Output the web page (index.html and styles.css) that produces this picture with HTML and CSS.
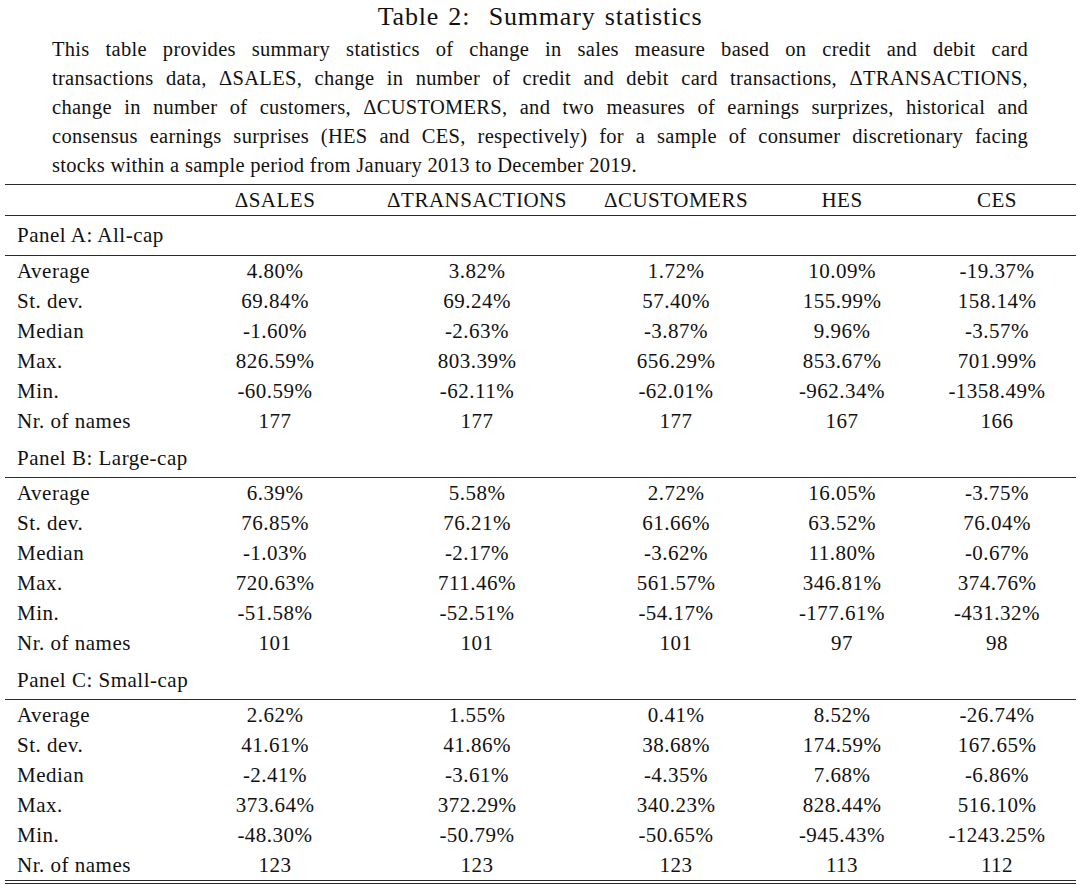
FILE: index.html
```html
<!DOCTYPE html>
<html>
<head>
<meta charset="utf-8">
<link rel="stylesheet" href="styles.css">
</head>
<body>
<div class="page">
  <div class="title">Table 2:&nbsp; Summary statistics</div>
  <div class="caption">
    <div class="cl">This table provides summary statistics of change in sales measure based on credit and debit card</div>
    <div class="cl">transactions data, ΔSALES, change in number of credit and debit card transactions, ΔTRANSACTIONS,</div>
    <div class="cl">change in number of customers, ΔCUSTOMERS, and two measures of earnings surprizes, historical and</div>
    <div class="cl">consensus earnings surprises (HES and CES, respectively) for a sample of consumer discretionary facing</div>
    <div class="cl last">stocks within a sample period from January 2013 to December 2019.</div>
  </div>
  <div class="table">
    <div class="row head">
      <div class="lab"></div><div>ΔSALES</div><div>ΔTRANSACTIONS</div><div>ΔCUSTOMERS</div><div>HES</div><div>CES</div>
    </div>
    <div class="panel first">Panel A: All-cap</div>
    <div class="row"><div class="lab">Average</div><div>4.80%</div><div>3.82%</div><div>1.72%</div><div>10.09%</div><div>-19.37%</div></div>
    <div class="row"><div class="lab">St. dev.</div><div>69.84%</div><div>69.24%</div><div>57.40%</div><div>155.99%</div><div>158.14%</div></div>
    <div class="row"><div class="lab">Median</div><div>-1.60%</div><div>-2.63%</div><div>-3.87%</div><div>9.96%</div><div>-3.57%</div></div>
    <div class="row"><div class="lab">Max.</div><div>826.59%</div><div>803.39%</div><div>656.29%</div><div>853.67%</div><div>701.99%</div></div>
    <div class="row"><div class="lab">Min.</div><div>-60.59%</div><div>-62.11%</div><div>-62.01%</div><div>-962.34%</div><div>-1358.49%</div></div>
    <div class="row"><div class="lab">Nr. of names</div><div>177</div><div>177</div><div>177</div><div>167</div><div>166</div></div>
    <div class="panel">Panel B: Large-cap</div>
    <div class="row"><div class="lab">Average</div><div>6.39%</div><div>5.58%</div><div>2.72%</div><div>16.05%</div><div>-3.75%</div></div>
    <div class="row"><div class="lab">St. dev.</div><div>76.85%</div><div>76.21%</div><div>61.66%</div><div>63.52%</div><div>76.04%</div></div>
    <div class="row"><div class="lab">Median</div><div>-1.03%</div><div>-2.17%</div><div>-3.62%</div><div>11.80%</div><div>-0.67%</div></div>
    <div class="row"><div class="lab">Max.</div><div>720.63%</div><div>711.46%</div><div>561.57%</div><div>346.81%</div><div>374.76%</div></div>
    <div class="row"><div class="lab">Min.</div><div>-51.58%</div><div>-52.51%</div><div>-54.17%</div><div>-177.61%</div><div>-431.32%</div></div>
    <div class="row"><div class="lab">Nr. of names</div><div>101</div><div>101</div><div>101</div><div>97</div><div>98</div></div>
    <div class="panel">Panel C: Small-cap</div>
    <div class="row"><div class="lab">Average</div><div>2.62%</div><div>1.55%</div><div>0.41%</div><div>8.52%</div><div>-26.74%</div></div>
    <div class="row"><div class="lab">St. dev.</div><div>41.61%</div><div>41.86%</div><div>38.68%</div><div>174.59%</div><div>167.65%</div></div>
    <div class="row"><div class="lab">Median</div><div>-2.41%</div><div>-3.61%</div><div>-4.35%</div><div>7.68%</div><div>-6.86%</div></div>
    <div class="row"><div class="lab">Max.</div><div>373.64%</div><div>372.29%</div><div>340.23%</div><div>828.44%</div><div>516.10%</div></div>
    <div class="row"><div class="lab">Min.</div><div>-48.30%</div><div>-50.79%</div><div>-50.65%</div><div>-945.43%</div><div>-1243.25%</div></div>
    <div class="row"><div class="lab">Nr. of names</div><div>123</div><div>123</div><div>123</div><div>113</div><div>112</div></div>
    <div class="bottom"></div>
  </div>
</div>
</body>
</html>
```

FILE: styles.css
```css
html, body {
  margin: 0;
  padding: 0;
  background: #ffffff;
}
.page {
  font-family: "Liberation Serif", "Times New Roman", serif;
  color: #111111;
  width: 1080px;
}
.title {
  text-align: center;
  font-size: 26px;
  line-height: 30px;
  padding-top: 2px;
  letter-spacing: 0.8px;
  word-spacing: 2px;
}
.caption {
  margin: 3px 0 0 52px;
  width: 976px;
  font-size: 20.5px;
  line-height: 29px;
  letter-spacing: 0.3px;
}
.cl {
  text-align: justify;
  text-align-last: justify;
}
.cl.last {
  text-align-last: left;
}
.table {
  margin: 4px 0 0 5px;
  width: 1071px;
  border-top: 1.6px solid #2a2a2a;
  font-size: 21px;
  letter-spacing: 0.5px;
}
.row {
  display: grid;
  grid-template-columns: 185px 170px 234px 164px 168px 142px;
  height: 30px;
  padding-top: 1px;
  box-sizing: border-box;
  align-items: center;
  text-align: center;
}
.row .lab {
  text-align: left;
  padding-left: 12px;
}
.row.head {
  height: 31px;
  padding-top: 0;
  border-bottom: 1.4px solid #2a2a2a;
}
.panel {
  height: 42px;
  display: flex;
  align-items: center;
  padding-left: 12px;
  padding-top: 4px;
  box-sizing: border-box;
  border-bottom: 1.4px solid #2a2a2a;
}
.panel.first {
  height: 40px;
  padding-top: 0;
}
.bottom {
  height: 2px;
  border-top: 1.6px solid #2a2a2a;
  border-bottom: 1.6px solid #2a2a2a;
}
```
